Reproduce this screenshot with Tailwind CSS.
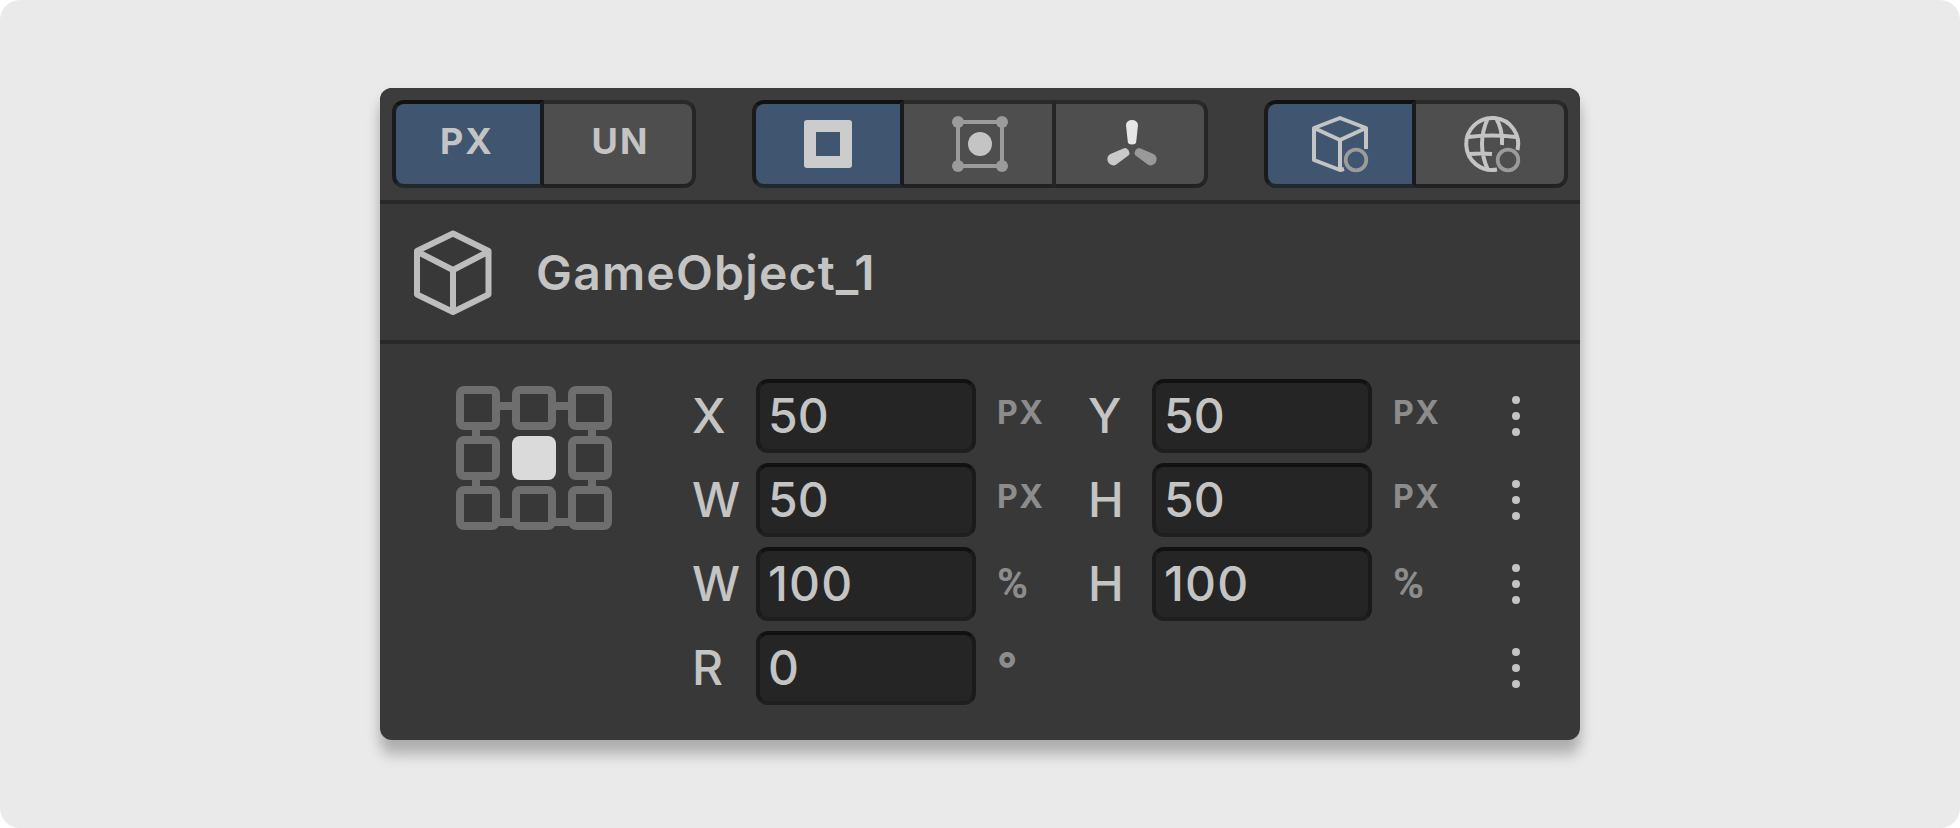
<!DOCTYPE html>
<html lang="en">
<head>
<meta charset="utf-8">
<title>GameObject inspector</title>
<script src="https://cdn.jsdelivr.net/npm/@tailwindcss/browser@4"></script>
</head>
<body class="bg-white">
<div class="flex h-[828px] w-[1960px] items-start justify-center rounded-[20px] bg-[#eaeaea] pt-[88px] font-['Inter',sans-serif] text-[#c4c4c4]">
  <main class="h-[652px] w-[1200px] overflow-visible rounded-xl bg-[#383838] shadow-[0_15px_14px_rgba(0,0,0,0.23),0_4px_14px_rgba(0,0,0,0.06)]">
    <header class="flex h-[116px] justify-between rounded-t-xl border-b-4 border-[#292929] bg-[#3c3c3c] p-3">
      <div class="flex h-[88px] text-[36px] leading-[74px] font-bold tracking-[2px]">
        <button class="w-[152px] rounded-l-xl border-4 border-[#1a1b1c] border-t-[#111111] border-b-[#22272b] bg-[#3f5570] pr-0.5 pb-1.5">PX</button>
        <button class="w-[152px] rounded-r-xl border-4 border-l-0 border-[#262626] border-t-[#2a2a2a] border-b-[#222222] bg-[#4e4e4e] pb-1.5 pl-[5px]">UN</button>
      </div>
      <div class="flex h-[88px]">
        <button class="flex w-[152px] items-center justify-center rounded-l-xl border-4 border-[#1a1b1c] border-t-[#111111] border-b-[#22272b] bg-[#3f5570]">
          <svg class="size-16" viewBox="0 0 64 64"><path fill="#cccccc" fill-rule="evenodd" d="M11 8H53a3 3 0 0 1 3 3V53a3 3 0 0 1-3 3H11a3 3 0 0 1-3-3V11a3 3 0 0 1 3-3ZM20 20V44H44V20Z"/></svg>
        </button>
        <button class="flex w-[152px] items-center justify-center border-y-4 border-r-4 border-[#262626] border-t-[#2a2a2a] border-b-[#222222] bg-[#4e4e4e] pl-1">
          <svg class="size-16" viewBox="0 0 64 64"><rect x="10" y="10" width="44" height="44" fill="none" stroke="#9b9b9b" stroke-width="4"/><g fill="#9b9b9b"><circle cx="10" cy="10" r="6"/><circle cx="54" cy="10" r="6"/><circle cx="10" cy="54" r="6"/><circle cx="54" cy="54" r="6"/></g><circle cx="32" cy="32" r="12" fill="#c4c4c4"/></svg>
        </button>
        <button class="flex w-[152px] items-center justify-center rounded-r-xl border-4 border-l-0 border-[#262626] border-t-[#2a2a2a] border-b-[#222222] bg-[#4e4e4e] pl-1">
          <svg class="size-16" viewBox="0 0 64 64"><path fill="#e6e6e6" d="M26 13a6 5 0 0 1 12 0L36.300 29a4.300 3.600 0 0 1-8.600 0Z"/><path fill="#c9c9c9" transform="rotate(240 32 36.500)" d="M26 14.500a6 5.500 0 0 1 12 0L36.300 29a4.300 3.600 0 0 1-8.600 0Z"/><path fill="#999999" transform="rotate(120 32 36.500)" d="M26 14.500a6 5.500 0 0 1 12 0L36.300 29a4.300 3.600 0 0 1-8.600 0Z"/></svg>
        </button>
      </div>
      <div class="flex h-[88px]">
        <button class="flex w-[152px] items-center justify-center rounded-l-xl border-4 border-[#1a1b1c] border-t-[#111111] border-b-[#22272b] bg-[#3f5570]">
          <svg class="size-16" viewBox="0 0 64 64" fill="none" stroke="#c4c4c4" stroke-width="4"><path d="M58 37V16L32 6 6 16V48L32 58 36 57M6 16 32 28 58 16M32 28V58" stroke-linejoin="round"/><circle cx="48" cy="48" r="10.300" stroke="#9b9b9b" stroke-width="3.800"/></svg>
        </button>
        <button class="flex w-[152px] items-center justify-center rounded-r-xl border-4 border-l-0 border-[#262626] border-t-[#2a2a2a] border-b-[#222222] bg-[#4e4e4e] pl-1">
          <svg class="size-16" viewBox="0 0 64 64" fill="none" stroke="#c4c4c4" stroke-width="4"><path d="M37 57.500A26 26 0 1 1 57.500 38M8 25Q32 22 56 25M10 42Q20 41 32 42M28 6Q16 32 28 58M36 6Q43 18 42 33"/><circle cx="48" cy="48" r="10.300" stroke="#9b9b9b" stroke-width="3.800"/></svg>
        </button>
      </div>
    </header>
    <section class="flex h-[140px] items-center border-b-4 border-[#292929] pl-6">
      <svg class="h-24 w-24" viewBox="0 0 96 96" fill="none" stroke="#bdbdbd" stroke-width="6" stroke-linejoin="round"><path d="M49 9.500 84.500 27V70.500L49 88 13 70.500V27ZM13 27.500 49 46 84.500 27.500M49 46V88"/></svg>
      <h1 class="ml-9 pt-0.5 text-[48px] font-semibold tracking-[1.2px]">GameObject_1</h1>
    </section>
    <section class="flex pt-[35px]">
      <svg class="mt-[7px] ml-[76px] h-36 w-[156px]" viewBox="0 0 156 144" fill="none" stroke="#6e6e6e" stroke-width="8">
        <path d="M44 20H56M100 20H112M42 136H58M98 136H114M20 44V50M20 94V100M136 44V50M136 94V100"/>
        <g stroke="none" fill="#6e6e6e"><path fill-rule="evenodd" id="cell" d="M8 0H36a8 8 0 0 1 8 8V36a8 8 0 0 1-8 8H8a8 8 0 0 1-8-8V8a8 8 0 0 1 8-8ZM8 8V36H36V8Z"/><use href="#cell" x="56"/><use href="#cell" x="112"/><use href="#cell" y="50"/><use href="#cell" x="112" y="50"/><use href="#cell" y="100"/><use href="#cell" x="56" y="100"/><use href="#cell" x="112" y="100"/></g>
        <rect x="56" y="50" width="44" height="44" rx="8" fill="#dadada" stroke="none"/>
      </svg>
      <div id="rows" class="ml-20 flex flex-col gap-2.5 text-[48px] leading-[66px] font-[480]"></div>
    </section>
  </main>
</div>
<script>
const unitStyle = {
  'PX': '-mt-[6px] ml-[21px] text-[32px] font-bold tracking-[1.5px]',
  '%': "-mt-px ml-[21px] font-['Roboto',sans-serif] text-[42px] font-bold",
  '°': 'ml-[21px] text-[44px] font-extrabold',
};
const field = (label, value, unit) => `
  <label class="flex w-[396px] items-center">
    <span class="w-16">${label}</span>
    <span class="h-[74px] w-[220px] rounded-xl border-4 border-[#1a1a1a] border-t-[#111111] border-b-[#1f1f1f] bg-[#252525] pl-2 ${value.length > 2 ? 'tracking-[1.2px]' : ''}">${value}</span>
    <span class="${unitStyle[unit]} text-[#8c8c8c]">${unit}</span>
  </label>`;
const rows = [
  [['X', '50', 'PX'], ['Y', '50', 'PX']],
  [['W', '50', 'PX'], ['H', '50', 'PX']],
  [['W', '100', '%'], ['H', '100', '%']],
  [['R', '0', '°']],
];
document.getElementById('rows').innerHTML = rows.map(([a, b]) => `
  <div class="flex h-[74px] items-center">
    ${field(...a)}${b ? field(...b) : '<div class="w-[396px]"></div>'}
    <div class="ml-7 flex flex-col gap-2"><i class="size-2 rounded-full bg-[#c4c4c4]"></i><i class="size-2 rounded-full bg-[#c4c4c4]"></i><i class="size-2 rounded-full bg-[#c4c4c4]"></i></div>
  </div>`).join('');
</script>
</body>
</html>
